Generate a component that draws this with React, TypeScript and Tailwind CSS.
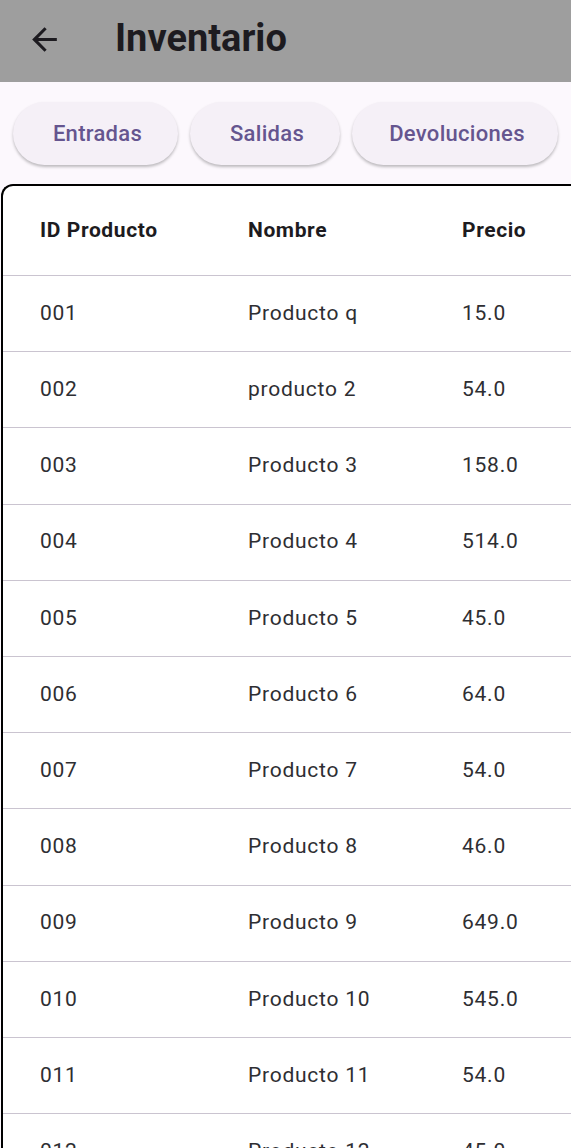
const rows = [
  ['001', 'Producto q', '15.0'],
  ['002', 'producto 2', '54.0'],
  ['003', 'Producto 3', '158.0'],
  ['004', 'Producto 4', '514.0'],
  ['005', 'Producto 5', '45.0'],
  ['006', 'Producto 6', '64.0'],
  ['007', 'Producto 7', '54.0'],
  ['008', 'Producto 8', '46.0'],
  ['009', 'Producto 9', '649.0'],
  ['010', 'Producto 10', '545.0'],
  ['011', 'Producto 11', '54.0'],
  ['012', 'Producto 12', '45.0'],
];

const tabs = [
  { label: 'Entradas', width: 'w-[165px]' },
  { label: 'Salidas', width: 'w-[150px]' },
  { label: 'Devoluciones', width: 'w-[206px]' },
];

export default function App() {
  return (
    <div className="h-[1148px] w-[571px] overflow-hidden bg-[#fcf8fd] font-['Roboto',sans-serif]">
      {/* app bar */}
      <header className="flex h-[82px] items-center bg-[#9e9e9e]">
        <svg viewBox="0 0 24 24" className="ml-[26px] -mt-[4px] h-[37px] w-[37px] text-[#1d1b20]" fill="currentColor">
          <path d="M20 11H7.83l5.59-5.59L12 4l-8 8 8 8 1.41-1.41L7.83 13H20v-2z" />
        </svg>
        <h1 className="ml-[52px] -mt-[6px] text-[38px] font-bold text-[#1d1b20]">Inventario</h1>
      </header>

      {/* tab buttons */}
      <div className="flex gap-[12px] px-[13px] pt-[20px] pb-[19px]">
        {tabs.map((t) => (
          <button
            key={t.label}
            className={`${t.width} h-[63px] shrink-0 rounded-full bg-[#f5f0f7] pl-[4px] text-[22px] font-medium tracking-[0.3px] text-[#65558f] shadow-[0_2px_3px_rgba(0,0,0,0.25)]`}
          >
            {t.label}
          </button>
        ))}
      </div>

      {/* table */}
      <div className="ml-[1px] w-[640px] rounded-tl-[12px] border-l-2 border-t-2 border-black bg-white">
        <div className="grid h-[90px] grid-cols-[208px_214px_1fr] items-center border-b border-[#cac4d0] pl-[37px] text-[21px] font-bold tracking-[0.6px] text-[#1d1b20]">
          <span>ID Producto</span>
          <span>Nombre</span>
          <span>Precio</span>
        </div>
        {rows.map((r) => (
          <div
            key={r[0]}
            className="grid h-[76.2px] grid-cols-[208px_214px_1fr] items-center border-b border-[#cac4d0] pl-[37px] text-[21px] tracking-[0.75px] text-[#2e2e32]"
          >
            <span>{r[0]}</span>
            <span>{r[1]}</span>
            <span>{r[2]}</span>
          </div>
        ))}
      </div>
    </div>
  );
}
